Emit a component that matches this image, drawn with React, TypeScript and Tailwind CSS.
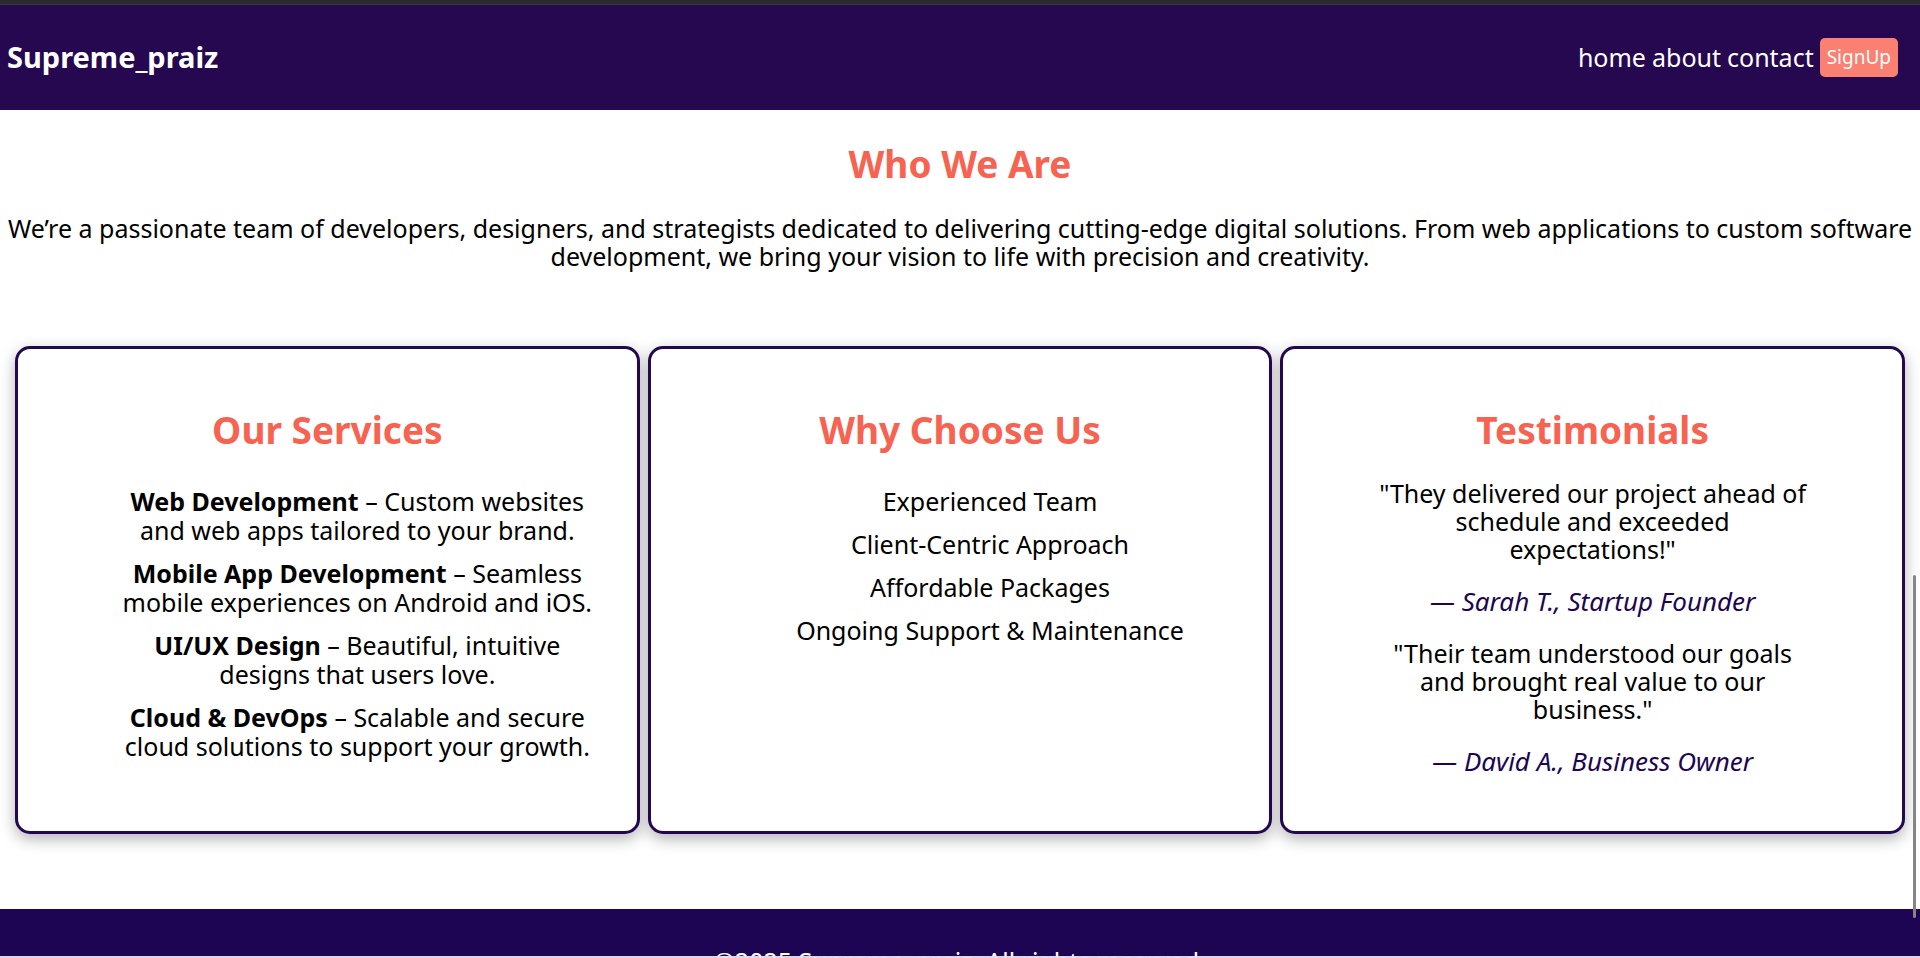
import type { ReactNode } from "react";

const services = [
  { name: "Web Development", lines: ["Custom websites", "and web apps tailored to your brand."] },
  { name: "Mobile App Development", lines: ["Seamless", "mobile experiences on Android and iOS."] },
  { name: "UI/UX Design", lines: ["Beautiful, intuitive", "designs that users love."] },
  { name: "Cloud & DevOps", lines: ["Scalable and secure", "cloud solutions to support your growth."] },
];

const reasons = [
  "Experienced Team",
  "Client-Centric Approach",
  "Affordable Packages",
  "Ongoing Support & Maintenance",
];

const testimonials = [
  {
    lines: ['"They delivered our project ahead of', "schedule and exceeded", 'expectations!"'],
    author: "— Sarah T., Startup Founder",
  },
  {
    lines: ['"Their team understood our goals', "and brought real value to our", 'business."'],
    author: "— David A., Business Owner",
  },
];

function Heading({ children }: { children: ReactNode }) {
  return <h2 className="text-[37px] leading-[44px] font-bold text-[#f76351]">{children}</h2>;
}

function Card({ title, children }: { title: string; children: ReactNode }) {
  return (
    <section className="rounded-[15px] border-3 border-[#230850] bg-white px-5 pt-[59px] pb-14 shadow-[0_5px_15px_rgba(0,0,0,0.3)]">
      <Heading>{title}</Heading>
      {children}
    </section>
  );
}

export default function App() {
  return (
    <div className="relative h-screen overflow-hidden bg-white text-center font-['Noto_Sans',sans-serif] text-[25px] leading-7 text-black">
      <div className="h-[5px] border-b border-[#38383c] bg-[#2b2a2f]" />

      <header className="flex items-center justify-between bg-[#250850] pt-8 pb-[33px] pr-[22px] pl-[7px] text-white">
        <h1 className="text-[29px] leading-10 font-bold">Supreme_praiz</h1>
        <nav className="flex items-center gap-1.5">
          <a href="#home">home</a>
          <a href="#about">about</a>
          <a href="#contact">contact</a>
          <button type="button" className="h-[39px] rounded-[5px] bg-[#fa8072] px-[7px] text-[19px]">
            SignUp
          </button>
        </nav>
      </header>

      <main>
        <section id="about" className="px-1 pt-8">
          <Heading>Who We Are</Heading>
          <p className="pt-7">
            We’re a passionate team of developers, designers, and strategists dedicated to delivering cutting-edge
            digital solutions. From web applications to custom software
            <br />
            development, we bring your vision to life with precision and creativity.
          </p>
        </section>

        <div className="grid grid-cols-3 gap-2 px-[15px] pt-[76px] pb-[75px]">
          <Card title="Our Services">
            <ul className="flex flex-col gap-3.5 pt-[35px] pl-[60px] leading-[29px]">
              {services.map((service) => (
                <li key={service.name}>
                  <strong className="font-bold">{service.name}</strong> – {service.lines[0]}
                  <br />
                  {service.lines[1]}
                </li>
              ))}
            </ul>
          </Card>

          <Card title="Why Choose Us">
            <ul className="flex flex-col gap-3.5 pt-[35px] pl-[60px] leading-[29px]">
              {reasons.map((reason) => (
                <li key={reason}>{reason}</li>
              ))}
            </ul>
          </Card>

          <Card title="Testimonials">
            <div className="flex flex-col gap-6 pt-[27px]">
              {testimonials.map((item) => (
                <blockquote key={item.author} className="flex flex-col gap-6">
                  <p>
                    {item.lines.map((line) => (
                      <span key={line} className="block">
                        {line}
                      </span>
                    ))}
                  </p>
                  <cite className="text-[26px] text-[#1d0553]">{item.author}</cite>
                </blockquote>
              ))}
            </div>
          </Card>
        </div>
      </main>

      <footer className="bg-[#1d0553] py-[38px] text-white">
        <p>©2025 Supreme_praiz. All rights reserved.</p>
      </footer>

      <div className="absolute top-[575px] right-1 h-[343px] w-[3px] rounded-full bg-[#858585]" />
      <div className="absolute inset-x-0 bottom-0 h-0.5 bg-[#e6e1e9]/95" />
    </div>
  );
}
